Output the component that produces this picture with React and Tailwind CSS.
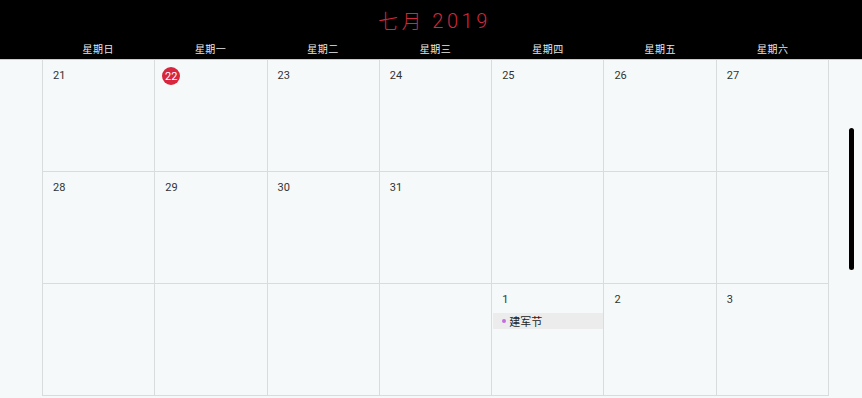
import React from "react";

const weekdays = ["星期日", "星期一", "星期二", "星期三", "星期四", "星期五", "星期六"];
const rows = [
  ["21", "22", "23", "24", "25", "26", "27"],
  ["28", "29", "30", "31", "", "", ""],
  ["", "", "", "", "1", "2", "3"],
];

export default function App() {
  return (
    <div
      className="w-[862px] h-[398px] overflow-hidden bg-[#f5f9f9] relative"
      style={{ fontFamily: 'Roboto, "Noto Sans CJK SC", sans-serif' }}
    >
      <div className="bg-black h-[59px] flex flex-col">
        <div className="h-[40px] flex items-center justify-center text-[20px] font-light tracking-[0.18em] text-[#d0283c] pt-[1px] pl-[7px]">
          <span style={{ fontFamily: '"Noto Sans CJK SC", sans-serif' }} className="font-light">七月</span>
          <span className="ml-[7px]">2019</span>
        </div>
        <div className="h-[19px] pl-[42px] pr-[33px] grid grid-cols-7 items-center text-[10px] text-[#e8e8e8] tracking-[0.05em]">
          {weekdays.map((w) => (
            <div key={w} className="text-center">{w}</div>
          ))}
        </div>
      </div>
      <div className="pl-[42px] pr-[33px] border-t border-[#c9cccc]">
        <div className="grid grid-cols-7 border-l border-[#d8dcdc]">
          {rows.flat().map((d, i) => {
            const isToday = i === 1;
            const hasEvent = i === 18;
            return (
              <div
                key={i}
                className="h-[112px] border-r border-b border-[#d8dcdc] flex flex-col"
              >
                <div className="h-[29px] pt-[7px] pl-[10px] flex items-start text-[11px] leading-[17px] text-[#333]">
                  {isToday ? (
                    <span className="w-[18px] h-[18px] -ml-[3px] rounded-full bg-[#d7263d] text-white flex items-center justify-center text-[11px]">
                      {d}
                    </span>
                  ) : (
                    d
                  )}
                </div>
                {hasEvent && (
                  <div className="h-[16px] ml-[1px] bg-[#ececec] flex items-center pl-[9px] text-[11px] text-[#222]">
                    <span className="w-[4px] h-[4px] rounded-full bg-[#c46ddf] mr-[3px]" />
                    <span style={{ fontFamily: '"Noto Sans CJK SC", sans-serif' }}>建军节</span>
                  </div>
                )}
              </div>
            );
          })}
        </div>
      </div>
      <div className="absolute left-[849px] top-[128px] w-[5px] h-[142px] rounded-full bg-black" />
    </div>
  );
}
